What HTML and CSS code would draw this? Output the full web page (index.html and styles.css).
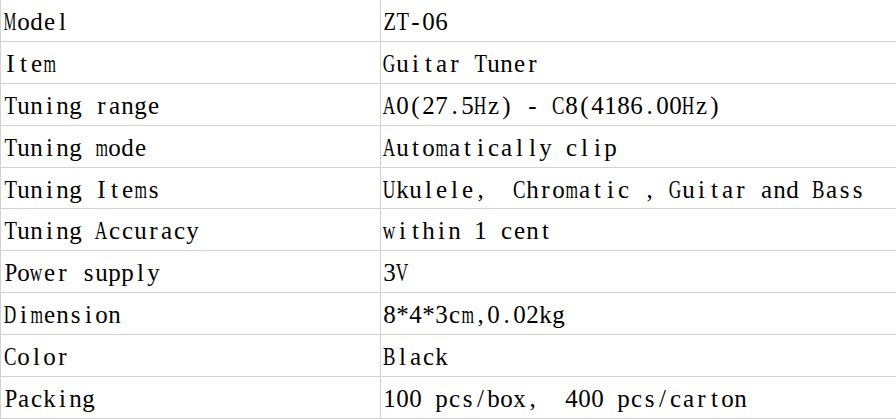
FILE: index.html
```html
<!DOCTYPE html>
<html>
<head>
<meta charset="utf-8">
<link rel="stylesheet" href="styles.css">
</head>
<body>
<div class="spec">
  <div class="cell key">Model</div><div class="cell val">ZT-06</div>
  <div class="cell key">Item</div><div class="cell val">Guitar Tuner</div>
  <div class="cell key">Tuning range</div><div class="cell val">A0(27.5Hz) - C8(4186.00Hz)</div>
  <div class="cell key">Tuning mode</div><div class="cell val">Automatically clip</div>
  <div class="cell key">Tuning Items</div><div class="cell val">Ukulele,&nbsp; Chromatic , Guitar and Bass</div>
  <div class="cell key">Tuning Accuracy</div><div class="cell val">within 1 cent</div>
  <div class="cell key">Power supply</div><div class="cell val">3V</div>
  <div class="cell key">Dimension</div><div class="cell val">8*4*3cm,0.02kg</div>
  <div class="cell key">Color</div><div class="cell val">Black</div>
  <div class="cell key">Packing</div><div class="cell val">100 pcs/box,&nbsp; 400 pcs/carton</div>
</div>
<script src="script.js"></script>
</body>
</html>
```

FILE: styles.css
```css
html, body {
  margin: 0;
  padding: 0;
  background: #ffffff;
  overflow: hidden;
}

.spec {
  display: grid;
  grid-template-columns: 379px 1fr;
  grid-auto-rows: 40.9px;
  gap: 1px;
  padding: 1px 0 1px 1px;
  margin-top: -1px;
  width: 1000px;
  background: #d2d2d2;
}

.cell {
  background: #ffffff;
  display: flex;
  align-items: center;
  font-family: "Liberation Serif", serif;
  font-size: 25px;
  line-height: 1;
  color: #000000;
  white-space: pre;
  padding-top: 2px;
}

.key {
  padding-left: 3px;
}

.val {
  padding-left: 2px;
}

.ch {
  display: inline-flex;
  justify-content: center;
  width: 13px;
}

.g {
  display: inline-block;
  flex: none;
  transform-origin: center;
}
```

FILE: script.js
```js
document.querySelectorAll('.cell').forEach(function (cell) {
  var text = cell.textContent;
  cell.textContent = '';
  var glyphs = [];
  for (var i = 0; i < text.length; i++) {
    var box = document.createElement('span');
    box.className = 'ch';
    var g = document.createElement('span');
    g.className = 'g';
    g.textContent = text[i];
    box.appendChild(g);
    cell.appendChild(box);
    glyphs.push(g);
  }
  glyphs.forEach(function (g) {
    var w = g.getBoundingClientRect().width;
    if (w > 12.5) {
      g.style.transform = 'scaleX(' + (12.5 / w).toFixed(3) + ')';
    }
  });
});
```
